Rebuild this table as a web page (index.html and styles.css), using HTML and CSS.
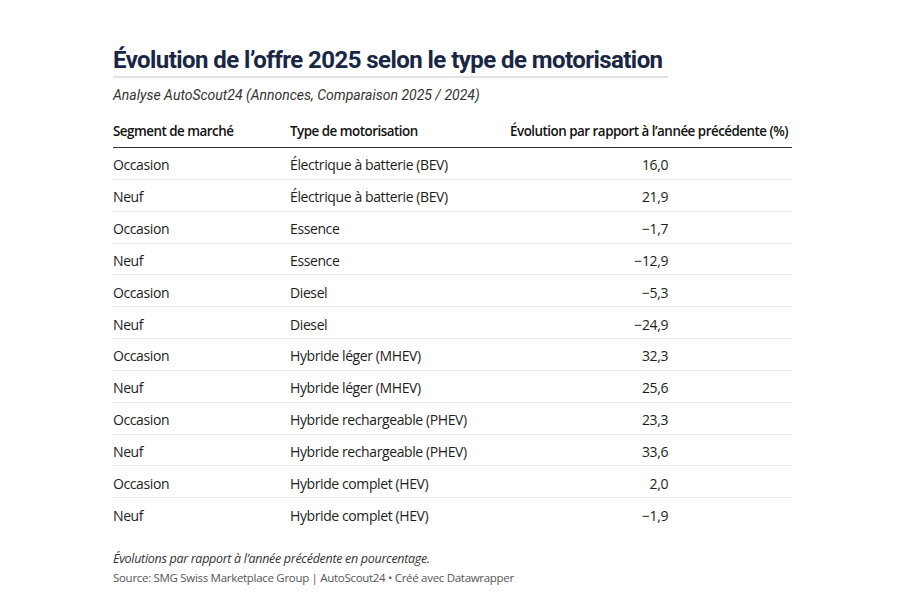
FILE: index.html
```html
<!DOCTYPE html>
<html lang="fr">
<head>
<meta charset="utf-8">
<link rel="stylesheet" href="styles.css">
</head>
<body>
<div class="chart">
  <div class="head">
    <h1 class="title">Évolution de l’offre 2025 selon le type de motorisation</h1>
  </div>
  <p class="subtitle">Analyse AutoScout24 (Annonces, Comparaison 2025 / 2024)</p>
  <div class="table">
    <div class="row th">
      <div class="c1">Segment de marché</div>
      <div class="c2">Type de motorisation</div>
      <div class="c3">Évolution par rapport à l’année précédente (%)</div>
    </div>
    <div class="row"><div class="c1">Occasion</div><div class="c2">Électrique à batterie (BEV)</div><div class="c3 num">16,0</div></div>
    <div class="row"><div class="c1">Neuf</div><div class="c2">Électrique à batterie (BEV)</div><div class="c3 num">21,9</div></div>
    <div class="row"><div class="c1">Occasion</div><div class="c2">Essence</div><div class="c3 num">−1,7</div></div>
    <div class="row"><div class="c1">Neuf</div><div class="c2">Essence</div><div class="c3 num">−12,9</div></div>
    <div class="row"><div class="c1">Occasion</div><div class="c2">Diesel</div><div class="c3 num">−5,3</div></div>
    <div class="row"><div class="c1">Neuf</div><div class="c2">Diesel</div><div class="c3 num">−24,9</div></div>
    <div class="row"><div class="c1">Occasion</div><div class="c2">Hybride léger (MHEV)</div><div class="c3 num">32,3</div></div>
    <div class="row"><div class="c1">Neuf</div><div class="c2">Hybride léger (MHEV)</div><div class="c3 num">25,6</div></div>
    <div class="row"><div class="c1">Occasion</div><div class="c2">Hybride rechargeable (PHEV)</div><div class="c3 num">23,3</div></div>
    <div class="row"><div class="c1">Neuf</div><div class="c2">Hybride rechargeable (PHEV)</div><div class="c3 num">33,6</div></div>
    <div class="row"><div class="c1">Occasion</div><div class="c2">Hybride complet (HEV)</div><div class="c3 num">2,0</div></div>
    <div class="row last"><div class="c1">Neuf</div><div class="c2">Hybride complet (HEV)</div><div class="c3 num">−1,9</div></div>
  </div>
  <p class="note">Évolutions par rapport à l’année précédente en pourcentage.</p>
  <p class="source">Source: SMG Swiss Marketplace Group | AutoScout24 • Créé avec Datawrapper</p>
</div>
</body>
</html>
```

FILE: styles.css
```css
html, body {
  margin: 0;
  padding: 0;
  background: #ffffff;
}

.chart {
  width: 680px;
  padding: 44px 0 0 113px;
  font-family: "Open Sans", "Liberation Sans", sans-serif;
  color: #1d1d1d;
}

.head {
  display: inline-block;
  border-bottom: 2px solid #e2e2e6;
  padding-right: 5px;
}

.title {
  margin: 0;
  font-family: Roboto, "Liberation Sans", sans-serif;
  font-size: 24px;
  font-weight: 700;
  line-height: 32px;
  color: #1a2744;
  letter-spacing: -0.56px;
}

.subtitle {
  margin: 8px 0 0;
  font-family: Roboto, "Liberation Sans", sans-serif;
  font-style: italic;
  font-size: 14px;
  line-height: 18px;
  color: #333;
}

.table {
  margin-top: 11px;
  width: 679px;
}

.row {
  display: grid;
  grid-template-columns: 177px 220px 1fr;
  align-items: center;
  font-size: 14px;
  letter-spacing: -0.4px;
  border-bottom: 1px dotted #d6d6d6;
  box-sizing: border-box;
  height: 31.85px;
  padding-top: 3px;
  white-space: nowrap;
}

.row.last {
  border-bottom: none;
}

.row.th {
  font-weight: 600;
  font-size: 13.4px;
  letter-spacing: -0.5px;
  height: 33px;
  padding-top: 0;
  border-bottom: 1.5px solid #333;
  color: #111;
}

.num {
  text-align: right;
  padding-right: 124px;
}

.note {
  margin: 20px 0 0;
  font-size: 12.5px;
  font-style: italic;
  color: #333;
  letter-spacing: -0.3px;
}

.source {
  margin: 3px 0 0;
  font-size: 11.5px;
  color: #555;
  letter-spacing: -0.3px;
}
```
